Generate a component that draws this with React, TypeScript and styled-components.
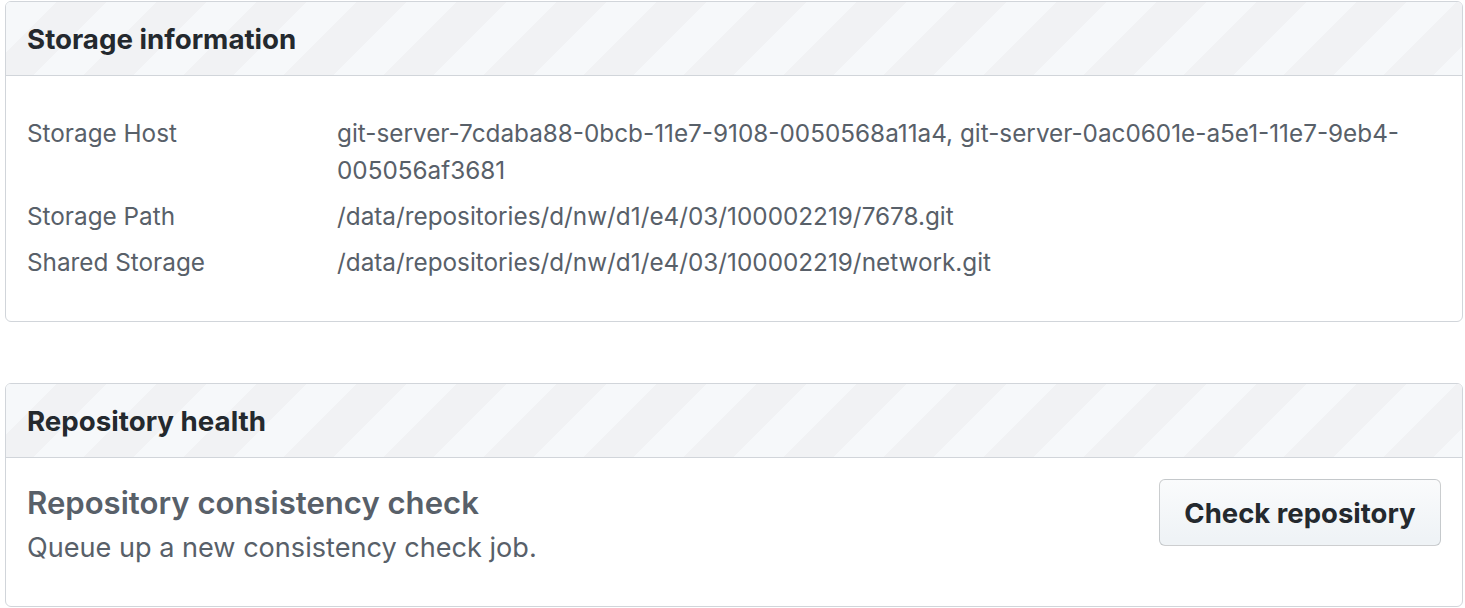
import React from "react";
import styled, { createGlobalStyle } from "styled-components";

const GlobalStyle = createGlobalStyle`
  html, body {
    margin: 0;
    padding: 0;
    background: #ffffff;
  }
  body {
    font-family: Inter, "Liberation Sans", Arial, sans-serif;
    color: #24292e;
    -webkit-font-smoothing: antialiased;
  }
`;

const Page = styled.div`
  padding: 1px 2px 0 5px;
  display: flex;
  flex-direction: column;
  gap: 61px;
`;

const Box = styled.section`
  border: 1px solid #d1d5da;
  border-radius: 6px;
  background: #fff;
  overflow: hidden;
`;

const BoxHeader = styled.header`
  height: 73px;
  display: flex;
  align-items: center;
  padding: 0 21px;
  border-bottom: 1px solid #d1d5da;
  background-color: #f6f8fa;
  background-image: repeating-linear-gradient(
    135deg,
    #f6f8fa 0px,
    #f6f8fa 35.36px,
    #f1f2f4 35.36px,
    #f1f2f4 70.72px
  );
`;

const BoxTitle = styled.h3`
  margin: 0;
  font-size: 27.7px;
  font-weight: 700;
  color: #24292e;
`;

const InfoBody = styled.div`
  padding: 39px 21px 40px;
`;

const InfoList = styled.dl`
  margin: 0;
  display: grid;
  grid-template-columns: 310px 1fr;
  row-gap: 9.5px;
  font-size: 24.3px;
  line-height: 36.75px;
  color: #586069;
`;

const Label = styled.dt`
  margin: 0;
`;

const Value = styled.dd`
  margin: 0;
  padding-right: 30px;
`;

const HealthBody = styled.div`
  min-height: 148px;
  box-sizing: border-box;
  padding: 21px 21px 0 21px;
  display: flex;
  justify-content: space-between;
  align-items: flex-start;
`;

const HealthText = styled.div`
  padding-top: 3px;
`;

const HealthTitle = styled.h4`
  margin: 0;
  font-size: 31.1px;
  line-height: 42px;
  font-weight: 600;
  color: #586069;
`;

const HealthDesc = styled.p`
  margin: 6px 0 0;
  font-size: 27.1px;
  line-height: 36px;
  color: #586069;
`;

const Button = styled.button`
  width: 282px;
  height: 67px;
  border: 1px solid rgba(27, 31, 35, 0.2);
  border-radius: 6px;
  background-image: linear-gradient(-180deg, #fafbfc 0%, #eff3f6 90%);
  font-family: inherit;
  font-size: 27.5px;
  font-weight: 700;
  color: #24292e;
  cursor: pointer;
  padding: 0;
`;

const rows: { label: string; value: string }[] = [
  {
    label: "Storage Host",
    value:
      "git-server-7cdaba88-0bcb-11e7-9108-0050568a11a4, git-server-0ac0601e-a5e1-11e7-9eb4-005056af3681",
  },
  {
    label: "Storage Path",
    value: "/data/repositories/d/nw/d1/e4/03/100002219/7678.git",
  },
  {
    label: "Shared Storage",
    value: "/data/repositories/d/nw/d1/e4/03/100002219/network.git",
  },
];

export default function App() {
  return (
    <>
      <GlobalStyle />
      <Page>
        <Box>
          <BoxHeader>
            <BoxTitle>Storage information</BoxTitle>
          </BoxHeader>
          <InfoBody>
            <InfoList>
              {rows.map((r) => (
                <React.Fragment key={r.label}>
                  <Label>{r.label}</Label>
                  <Value>{r.value}</Value>
                </React.Fragment>
              ))}
            </InfoList>
          </InfoBody>
        </Box>
        <Box>
          <BoxHeader>
            <BoxTitle>Repository health</BoxTitle>
          </BoxHeader>
          <HealthBody>
            <HealthText>
              <HealthTitle>Repository consistency check</HealthTitle>
              <HealthDesc>Queue up a new consistency check job.</HealthDesc>
            </HealthText>
            <Button type="button">Check repository</Button>
          </HealthBody>
        </Box>
      </Page>
    </>
  );
}
